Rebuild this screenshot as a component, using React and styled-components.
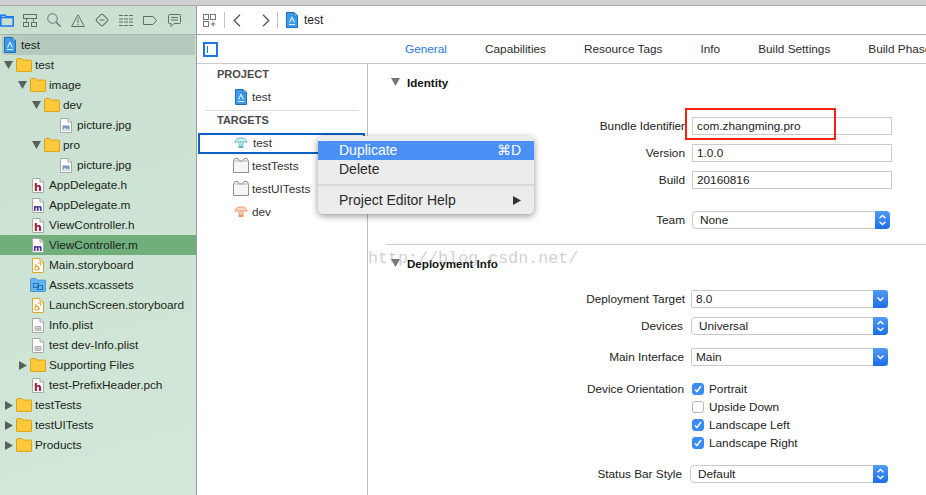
import React from 'react';
import styled, { createGlobalStyle } from 'styled-components';

const GlobalStyle = createGlobalStyle`
  html, body {
    margin: 0;
    padding: 0;
    background: #fff;
    overflow: hidden;
  }
  * {
    box-sizing: border-box;
  }
  svg {
    display: block;
    flex: none;
  }
`;

const Page = styled.div`
  position: relative;
  width: 926px;
  height: 495px;
  overflow: hidden;
  display: flex;
  flex-direction: column;
  font-family: 'Liberation Sans', Arial, sans-serif;
  font-size: 11.8px;
  color: #222;
`;

const TopStrip = styled.div`
  height: 6px;
  flex: none;
  background: #d0d0d0;
  border-bottom: 1px solid #a9a9a9;
`;

const Main = styled.div`
  flex: 1;
  min-height: 0;
  display: flex;
`;

/* navigator */
const Sidebar = styled.aside`
  width: 197px;
  flex: none;
  background: linear-gradient(165deg, #c9e0d1, #d2e7d7);
  border-right: 1px solid #9a9f9c;
`;

const NavTabs = styled.div`
  height: 29px;
  display: flex;
  align-items: center;
  gap: 8px;
  border-bottom: 1px solid #a9b6ae;
`;

const NavTab = styled.div`
  width: 16px;
  height: 16px;
  display: flex;
  align-items: center;
  justify-content: center;
  color: #666d69;
  &:first-child {
    width: 14px;
  }
`;

const Tree = styled.div`
  display: flex;
  flex-direction: column;
`;

const TreeRow = styled.div`
  height: 20px;
  display: flex;
  align-items: center;
  padding-left: ${(p) => 4 + p.$depth * 14}px;
  background: ${(p) => (p.$current ? '#70ae7b' : 'transparent')};
  color: #1b2620;
  white-space: nowrap;
`;

const RootRow = styled.div`
  height: 20px;
  margin: 0 1px 0 2px;
  display: flex;
  align-items: center;
  gap: 5px;
  padding-left: 2px;
  border-radius: 2px;
  background: #b5cabd;
  color: #1b2620;
`;

const Disclosure = styled.span`
  width: 12px;
  flex: none;
  display: flex;
  padding-left: ${(p) => (p.$open ? 0 : 1)}px;
`;

const IconSlot = styled.span`
  width: 19px;
  flex: none;
  display: flex;
  justify-content: ${(p) => (p.$file ? 'flex-end' : 'flex-start')};
  padding-right: ${(p) => (p.$file ? 5 : 0)}px;
`;

/* editor */
const Editor = styled.div`
  flex: 1;
  min-width: 0;
  display: flex;
  flex-direction: column;
`;

const JumpBar = styled.div`
  height: 29px;
  flex: none;
  display: flex;
  align-items: center;
  padding-left: 6px;
  border-bottom: 1px solid #acacac;
  font-size: 12px;
`;

const BarDivider = styled.span`
  width: 1px;
  height: 16px;
  background: #c4c4c4;
  margin: ${(p) => p.$margin};
`;

const BarGap = styled.span`
  width: ${(p) => p.$width}px;
  flex: none;
`;

const TabBar = styled.div`
  height: 29px;
  flex: none;
  display: flex;
  align-items: center;
  padding-left: 6px;
  border-bottom: 1px solid #c9c9c9;
  overflow: hidden;
`;

const PanelToggle = styled.span`
  width: 15px;
  height: 15px;
  flex: none;
  border: 2px solid #1a73f0;
  padding: 2px 0 2px 2px;
  &::before {
    content: '';
    display: block;
    width: 1px;
    height: 7px;
    background: #1a73f0;
  }
`;

const Tabs = styled.div`
  display: flex;
  gap: 38px;
  margin-left: 187px;
  white-space: nowrap;
`;

const Tab = styled.span`
  color: ${(p) => (p.$active ? '#2a78e4' : '#2b2b2b')};
`;

const Body = styled.div`
  flex: 1;
  min-height: 0;
  display: flex;
`;

const TargetList = styled.div`
  width: 171px;
  flex: none;
  border-right: 1px solid #bdbdbd;
  padding-top: 3px;
`;

const ListHeading = styled.div`
  height: 14px;
  line-height: 14px;
  margin-left: 20px;
  font-size: 11px;
  font-weight: 700;
  color: #4a4a4a;
`;

const ListRule = styled.div`
  height: 1px;
  margin: 1px 8px 2px 8px;
  background: #dcdcdc;
`;

const ListRow = styled.div`
  height: ${(p) => p.$height || 23}px;
  margin-top: ${(p) => p.$top || 0}px;
  display: flex;
  align-items: center;
  padding-left: ${(p) => p.$indent || 36}px;
  gap: ${(p) => p.$gap || 5}px;
  color: #333;
`;

const SelectedRow = styled(ListRow)`
  height: 21px;
  margin: 6px 2px 0 1px;
  padding: 0 0 1px 34px;
  border: 2px solid #0d5fc2;
`;

const Content = styled.div`
  flex: 1;
  min-width: 0;
  padding-top: 10px;
`;

const SectionHeader = styled.div`
  height: 18px;
  display: flex;
  align-items: center;
  gap: 7px;
  padding: 0 0 2px 23px;
  font-weight: 700;
  font-size: 11.6px;
  color: #111;
`;

const Rule = styled.div`
  height: 1px;
  margin: ${(p) => p.$top}px 0 10px 18px;
  background: #cfcfcf;
`;

const FormRow = styled.div`
  height: 18px;
  margin-top: ${(p) => p.$top || 0}px;
  display: flex;
  align-items: center;
`;

const Label = styled.label`
  width: ${(p) => p.$width || 317}px;
  flex: none;
  text-align: right;
  white-space: nowrap;
  color: #222;
`;

const TextField = styled.div`
  width: 200px;
  height: 18px;
  margin-left: 7px;
  padding-left: 4px;
  line-height: 16px;
  border: 1px solid #cbcbcb;
  background: #fff;
`;

const SelectBox = styled.div`
  width: ${(p) => p.$width}px;
  height: 18px;
  margin-left: ${(p) => p.$left}px;
  display: flex;
  align-items: center;
  justify-content: space-between;
  padding-left: ${(p) => (p.$round ? 7 : 4)}px;
  border: 1px solid #c9c9c9;
  border-radius: ${(p) => (p.$round ? 4 : 1)}px;
  background: #fff;
`;

const Stepper = styled.span`
  width: 15px;
  height: 18px;
  margin: -1px -1px -1px 0;
  display: flex;
  align-items: center;
  justify-content: center;
  border-radius: 0 4px 4px 0;
  background: linear-gradient(#4f9bf7, #1c6ee6);
`;

const CheckRow = styled(FormRow)`
  padding-left: 324px;
  gap: 5px;
`;

const CheckGroupRow = styled(FormRow)`
  gap: 8px;
`;

const CheckItem = styled.span`
  display: flex;
  align-items: center;
  gap: 5px;
`;

const Check = styled.span`
  width: 12px;
  height: 12px;
  flex: none;
  display: flex;
  align-items: center;
  justify-content: center;
  border-radius: 3px;
  background: ${(p) => (p.$on ? '#3a8bf4' : '#fff')};
  border: 1px solid ${(p) => (p.$on ? '#3a8bf4' : '#b4b4b4')};
`;

/* overlays */
const RedBox = styled.div`
  position: absolute;
  left: 685px;
  top: 108px;
  width: 151px;
  height: 32px;
  border: 2px solid #f4230f;
`;

const Watermark = styled.div`
  position: absolute;
  left: 368px;
  top: 248px;
  font-family: 'Liberation Mono', monospace;
  font-size: 16.7px;
  line-height: 22px;
  color: rgba(140, 140, 140, 0.42);
  pointer-events: none;
`;

const Menu = styled.div`
  position: absolute;
  left: 318px;
  top: 136px;
  width: 216px;
  height: 78px;
  padding-top: 5px;
  border-radius: 5px;
  background: #ececec;
  box-shadow: 0 2px 7px rgba(0, 0, 0, 0.42);
  font-size: 14px;
  color: #2a2a2a;
`;

const MenuItem = styled.div`
  height: 19px;
  display: flex;
  align-items: center;
  justify-content: space-between;
  padding: 0 13px 1px 21px;
  background: ${(p) => (p.$active ? '#4a90f6' : 'transparent')};
  color: ${(p) => (p.$active ? '#fff' : 'inherit')};
`;

const MenuRule = styled.div`
  height: 2px;
  margin: 5px 0 5px;
  background: #d8d8d8;
`;

/* drawings */
const Triangle = ({ open, color = '#55625b' }) =>
  open ? (
    <svg width="9" height="8" viewBox="0 0 9 8"><path d="M0 0h9L4.5 8z" fill={color} /></svg>
  ) : (
    <svg width="8" height="9" viewBox="0 0 8 9"><path d="M0 0l8 4.5L0 9z" fill={color} /></svg>
  );

const Folder = ({ blue }) => (
  <svg width="16" height="14" viewBox="0 0 16 14">
    <path
      d="M.5 13V1.500a1 1 0 011-1h4.200l1.300 1.600h7.500a1 1 0 011 1V13a.5.5 0 01-.5.5H1a.5.5 0 01-.5-.5z"
      fill={blue ? '#66b5ee' : '#fdc93c'}
      stroke={blue ? '#4b9ad6' : '#dfa21e'}
    />
    {blue && (
      <g fill="none" stroke="#1b6fb5">
        <rect x="3.500" y="5.500" width="5" height="4" />
        <rect x="7.500" y="7.500" width="5" height="4" />
      </g>
    )}
  </svg>
);

const Sheet = ({ children, stroke = '#a8a8a8' }) => (
  <svg width="12" height="15" viewBox="0 0 12 15">
    <path d="M.5.5h7.500l3.500 3.500v10.500H.5z" fill="#fdfdfd" stroke={stroke} />
    <path d="M8 .5V4h3.500" fill="#e4e4e4" stroke={stroke} />
    {children}
  </svg>
);

const Letter = ({ children, color }) => (
  <text x="5.800" y="12.500" textAnchor="middle" fontFamily="'DejaVu Sans', sans-serif" fontWeight="700" fontSize={children === 'm' ? 8.5 : 11} fill={color}>
    {children}
  </text>
);

const ProjectIcon = () => (
  <svg width="12" height="16" viewBox="0 0 12 16">
    <path d="M.5.5h7.500l3.500 3.500v11.500H.5z" fill="#3f9bea" stroke="#1a6fc4" />
    <path d="M8 .5V4h3.500z" fill="#cfe6fa" stroke="#1a6fc4" />
    <path d="M3 12.500h6M3.500 10.500L6 5.500l2.500 5" fill="none" stroke="#dff0ff" strokeWidth="1.100" />
  </svg>
);

const FileIcon = ({ kind }) => {
  if (kind === 'h') return <Sheet><Letter color="#9b1430">h</Letter></Sheet>;
  if (kind === 'm') return <Sheet><Letter color="#3d1d96">m</Letter></Sheet>;
  if (kind === 'story') {
    return (
      <Sheet stroke="#e3a62b">
        <path d="M3 6l5 5M3 8.500h3.500V12H3zM6 5h2.500v2.500" fill="none" stroke="#e3a62b" />
      </Sheet>
    );
  }
  if (kind === 'plist') {
    return (
      <Sheet>
        <path d="M3 8.500h6v4H3zM6 8.500v4M3 10.500h6" fill="#ddd" stroke="#b4b4b4" />
      </Sheet>
    );
  }
  return (
    <Sheet>
      <rect x="2.500" y="7.500" width="7" height="5" fill="#7e97b8" />
      <path d="M2.500 12.500l2.500-3 2 2 1-1 1.500 2z" fill="#dfe6ee" />
    </Sheet>
  );
};

const TargetIcon = ({ tone, soft }) => (
  <svg width="14" height="12" viewBox="0 0 14 12">
    <path d="M1 5.500C1 2.500 3.500 1 7 1s6 1.500 6 4.500c-1.500-1-3-1-4-.3L7 4.500l-2 .7c-1-.7-2.500-.7-4 .3z" fill={soft} stroke={tone} />
    <path d="M4.500 5.500l1 3M9.500 5.500l-1 3M7 5v3" stroke={tone} />
    <rect x="4.500" y="8.500" width="5" height="2.500" fill={tone} />
  </svg>
);

const BundleIcon = () => (
  <svg width="16" height="15" viewBox="0 0 16 15">
    <path d="M.5 14.500V3l1.500-2.500h3L6.500 3h3L11 .5h3L15.500 3v11.500z" fill="#f6f6f6" stroke="#8f8f8f" />
    <path d="M.5 3h15" stroke="#b5b5b5" />
  </svg>
);

const navIcons = [
  <svg key="folder" width="14" height="13" viewBox="0 0 14 13" fill="none" stroke="#1a7bf2" strokeWidth="1.600"><path d="M.8 12V1.200h4.400l1 1.600h7V12z" /><path d="M.8 3.500h12.400" /></svg>,
  <svg key="tree" width="14" height="13" viewBox="0 0 14 13" fill="none" stroke="currentColor"><rect x=".5" y=".5" width="13" height="4" /><path d="M3.500 4.500v3M10.500 4.500v3" /><rect x=".5" y="8.500" width="5" height="4" /><rect x="8.500" y="8.500" width="5" height="4" /></svg>,
  <svg key="search" width="14" height="14" viewBox="0 0 14 14" fill="none" stroke="currentColor"><circle cx="5.500" cy="5.500" r="4.800" /><path d="M9 9l4.500 4.500" strokeWidth="1.300" /></svg>,
  <svg key="warn" width="14" height="13" viewBox="0 0 14 13" fill="none" stroke="currentColor"><path d="M7 .8l6.400 11.700H.6z" /><path d="M7 4.500v4.500M7 10v1.200" /></svg>,
  <svg key="test" width="14" height="14" viewBox="0 0 14 14" fill="none" stroke="currentColor"><rect x="2.500" y="2.500" width="9" height="9" rx="1.500" transform="rotate(45 7 7)" /><path d="M4.500 7h5" /></svg>,
  <svg key="debug" width="14" height="11" viewBox="0 0 14 11" fill="none" stroke="currentColor"><path d="M0 .5h14M0 4h14M0 7h14M0 10.500h14" strokeDasharray="4 1" /></svg>,
  <svg key="tag" width="14" height="9" viewBox="0 0 14 9" fill="none" stroke="currentColor"><path d="M.5.5h9.500l3.500 4-3.500 4H.5z" /></svg>,
  <svg key="note" width="13" height="13" viewBox="0 0 13 13" fill="none" stroke="currentColor"><path d="M1.500.5h10a1 1 0 011 1v7a1 1 0 01-1 1H6l-3 3v-3H1.500a1 1 0 01-1-1v-7a1 1 0 011-1z" /><path d="M3 3.500h7M3 6h7" /></svg>,
];

const treeItems = [
  { name: 'test', depth: 0, open: true, icon: 'folder' },
  { name: 'image', depth: 1, open: true, icon: 'folder' },
  { name: 'dev', depth: 2, open: true, icon: 'folder' },
  { name: 'picture.jpg', depth: 3, icon: 'image' },
  { name: 'pro', depth: 2, open: true, icon: 'folder' },
  { name: 'picture.jpg', depth: 3, icon: 'image' },
  { name: 'AppDelegate.h', depth: 1, icon: 'h' },
  { name: 'AppDelegate.m', depth: 1, icon: 'm' },
  { name: 'ViewController.h', depth: 1, icon: 'h' },
  { name: 'ViewController.m', depth: 1, icon: 'm', current: true },
  { name: 'Main.storyboard', depth: 1, icon: 'story' },
  { name: 'Assets.xcassets', depth: 1, icon: 'blue' },
  { name: 'LaunchScreen.storyboard', depth: 1, icon: 'story' },
  { name: 'Info.plist', depth: 1, icon: 'plist' },
  { name: 'test dev-Info.plist', depth: 1, icon: 'plist' },
  { name: 'Supporting Files', depth: 1, open: false, icon: 'folder' },
  { name: 'test-PrefixHeader.pch', depth: 1, icon: 'h' },
  { name: 'testTests', depth: 0, open: false, icon: 'folder' },
  { name: 'testUITests', depth: 0, open: false, icon: 'folder' },
  { name: 'Products', depth: 0, open: false, icon: 'folder' },
];

const tabNames = ['General', 'Capabilities', 'Resource Tags', 'Info', 'Build Settings', 'Build Phases'];

const Chevrons = ({ both }) => (
  <svg width="9" height="14" viewBox="0 0 9 14" fill="none" stroke="#fff" strokeWidth="1.400">
    {both ? <path d="M1.500 5.200L4.500 2.500l3 2.700M1.500 8.800l3 2.700 3-2.700" /> : <path d="M1.500 5.500l3 3 3-3" />}
  </svg>
);

const CheckMark = () => (
  <svg width="8" height="8" viewBox="0 0 8 8" fill="none" stroke="#fff" strokeWidth="1.500"><path d="M1 4.500l2 2L7 1" /></svg>
);

const Select = ({ value, left, width, round }) => (
  <SelectBox $left={left} $width={width} $round={round}>
    {value}
    <Stepper><Chevrons both={round} /></Stepper>
  </SelectBox>
);

export default function App() {
  return (
    <Page>
      <GlobalStyle />
      <TopStrip />
      <Main>
        <Sidebar>
          <NavTabs>
            {navIcons.map((icon) => (
              <NavTab key={icon.key}>{icon}</NavTab>
            ))}
          </NavTabs>
          <Tree>
            <RootRow>
              <ProjectIcon />
              test
            </RootRow>
            {treeItems.map((item, i) => {
              const isFolder = item.icon === 'folder' || item.icon === 'blue';
              return (
                <TreeRow key={i} $depth={item.depth} $current={item.current}>
                  <Disclosure $open={item.open}>
                    {item.open !== undefined && <Triangle open={item.open} />}
                  </Disclosure>
                  <IconSlot $file={!isFolder}>
                    {isFolder ? <Folder blue={item.icon === 'blue'} /> : <FileIcon kind={item.icon} />}
                  </IconSlot>
                  {item.name}
                </TreeRow>
              );
            })}
          </Tree>
        </Sidebar>
        <Editor>
          <JumpBar>
            <svg width="13" height="13" viewBox="0 0 13 13" fill="none" stroke="#777">
              <rect x=".5" y=".5" width="5" height="5" />
              <rect x="7.500" y=".5" width="5" height="5" />
              <rect x=".5" y="7.500" width="5" height="5" />
              <path d="M7.500 10h5M10 7.500v5" />
            </svg>
            <BarDivider $margin="0 8px 0 8px" />
            <svg width="8" height="13" viewBox="0 0 8 13" fill="none" stroke="#555" strokeWidth="1.300"><path d="M7 .8L1.200 6.500 7 12.200" /></svg>
            <BarGap $width={21} />
            <svg width="8" height="13" viewBox="0 0 8 13" fill="none" stroke="#555" strokeWidth="1.300"><path d="M1 .8l5.800 5.700L1 12.200" /></svg>
            <BarDivider $margin="0 8px 0 7px" />
            <ProjectIcon />
            <BarGap $width={6} />
            test
          </JumpBar>
          <TabBar>
            <PanelToggle />
            <Tabs>
              {tabNames.map((name, i) => (
                <Tab key={name} $active={i === 0}>{name}</Tab>
              ))}
            </Tabs>
          </TabBar>
          <Body>
            <TargetList>
              <ListHeading>PROJECT</ListHeading>
              <ListRow $height={24} $top={4} $indent={38}>
                <ProjectIcon />
                test
              </ListRow>
              <ListRule />
              <ListHeading>TARGETS</ListHeading>
              <SelectedRow>
                <TargetIcon tone="#63b8c4" soft="#cdeef2" />
                test
              </SelectedRow>
              <ListRow $gap={3}>
                <BundleIcon />
                testTests
              </ListRow>
              <ListRow $gap={3}>
                <BundleIcon />
                testUITests
              </ListRow>
              <ListRow $gap={4} $indent={37}>
                <TargetIcon tone="#f0935f" soft="#fbd9c5" />
                dev
              </ListRow>
            </TargetList>
            <Content>
              <SectionHeader>
                <Triangle open color="#777" />
                Identity
              </SectionHeader>
              <FormRow $top={25}>
                <Label>Bundle Identifier</Label>
                <TextField>com.zhangming.pro</TextField>
              </FormRow>
              <FormRow $top={9}>
                <Label>Version</Label>
                <TextField>1.0.0</TextField>
              </FormRow>
              <FormRow $top={9}>
                <Label>Build</Label>
                <TextField>20160816</TextField>
              </FormRow>
              <FormRow $top={22}>
                <Label>Team</Label>
                <Select value="None" left={7} width={198} round />
              </FormRow>
              <Rule $top={15} />
              <SectionHeader>
                <Triangle open color="#777" />
                Deployment Info
              </SectionHeader>
              <FormRow $top={17}>
                <Label>Deployment Target</Label>
                <Select value="8.0" left={6} width={197} />
              </FormRow>
              <FormRow $top={9}>
                <Label $width={315}>Devices</Label>
                <Select value="Universal" left={8} width={197} round />
              </FormRow>
              <FormRow $top={13}>
                <Label $width={316}>Main Interface</Label>
                <Select value="Main" left={7} width={197} />
              </FormRow>
              <CheckGroupRow $top={14}>
                <Label $width={316}>Device Orientation</Label>
                <CheckItem><Check $on><CheckMark /></Check>Portrait</CheckItem>
              </CheckGroupRow>
              <CheckRow><Check />Upside Down</CheckRow>
              <CheckRow><Check $on><CheckMark /></Check>Landscape Left</CheckRow>
              <CheckRow><Check $on><CheckMark /></Check>Landscape Right</CheckRow>
              <FormRow $top={13}>
                <Label $width={314}>Status Bar Style</Label>
                <Select value="Default" left={8} width={198} round />
              </FormRow>
            </Content>
          </Body>
        </Editor>
      </Main>
      <RedBox />
      <Watermark>http://blog.csdn.net/</Watermark>
      <Menu>
        <MenuItem $active>Duplicate<span>⌘D</span></MenuItem>
        <MenuItem>Delete</MenuItem>
        <MenuRule />
        <MenuItem>
          Project Editor Help
          <svg width="8" height="9" viewBox="0 0 8 9"><path d="M0 0l8 4.500L0 9z" fill="#333" /></svg>
        </MenuItem>
      </Menu>
    </Page>
  );
}
